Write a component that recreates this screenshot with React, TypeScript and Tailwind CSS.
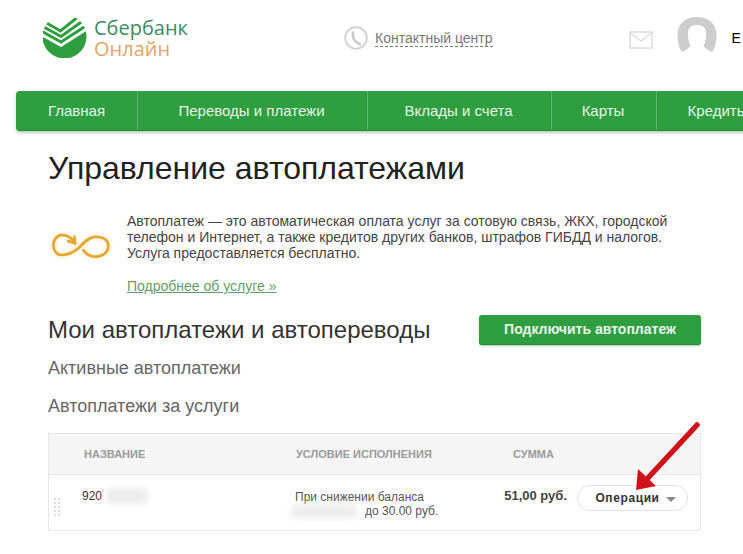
const navItems = [
  { label: "Главная", className: "w-[122px]" },
  { label: "Переводы и платежи", className: "w-[230px] pr-[2px]" },
  { label: "Вклады и счета", className: "w-[184px] pr-[2px]" },
  { label: "Карты", className: "w-[105px] pr-[2px]" },
  { label: "Кредиты", className: "w-[120px] pl-[2px]" },
];

function SberLogo() {
  return (
    <svg width="44" height="42" viewBox="0 0 44 42" className="shrink-0">
      <defs>
        <clipPath id="disc">
          <circle cx="21.5" cy="20.5" r="22" />
        </clipPath>
      </defs>
      <g clipPath="url(#disc)">
        <path d="M1 5.5 L17.5 15 L36 0" fill="none" stroke="#2f9e41" strokeWidth="3" />
        <path d="M0 10.5 L18 20.5 L39 5.5" fill="none" stroke="#2f9e41" strokeWidth="3" />
        <path d="M-1 15.5 L18 26 L42 10.5" fill="none" stroke="#2f9e41" strokeWidth="3" />
        <path d="M-2 20 L18 31 L44 14.5 L44 44 L-2 44 Z" fill="#2f9e41" />
      </g>
    </svg>
  );
}

function PhoneIcon() {
  return (
    <svg width="24" height="24" viewBox="0 0 24 24" className="shrink-0">
      <circle cx="12" cy="12" r="10.8" fill="#fff" stroke="#cfcfcf" strokeWidth="1.8" />
      <path d="M9 6.5 C8 12 11 16 16 18.5" fill="none" stroke="#c9c9c9" strokeWidth="2.6" strokeLinecap="round" />
    </svg>
  );
}

function MailIcon() {
  return (
    <svg width="24" height="18" viewBox="0 0 24 18" className="shrink-0">
      <rect x="1" y="1" width="22" height="16" fill="#fff" stroke="#dcdcdc" strokeWidth="1.6" />
      <path d="M1.5 2 L12 10 L22.5 2" fill="none" stroke="#dcdcdc" strokeWidth="1.4" />
    </svg>
  );
}

function Avatar() {
  return (
    <svg width="40" height="36" viewBox="0 0 40 36" className="shrink-0">
      <path
        d="M20 0 C32 0 39.5 7 39.5 18 C39.5 25 38 31 35 35 C32 34 29 32 26.5 29 C28.5 24 29.5 20 29 15 C28.5 10 25 8 20 8 C15 8 11.5 10 11 15 C10.5 20 11.5 24 13.5 29 C11 32 8 34 5 35 C2 31 0.5 25 0.5 18 C0.5 7 8 0 20 0 Z"
        fill="#cdcdcd"
      />
    </svg>
  );
}

function InfinityIcon() {
  return (
    <svg width="60" height="26" viewBox="0 0 60 26" className="shrink-0 drop-shadow-[0_0_2px_#f3d890]">
      <path
        d="M24 10 C21 5 16 2 10.7 2 C6 2 2.3 7 2.3 12 C2.3 18 6 22 10.7 22 C17 22 23 19 27.3 15.3 C33 10 38 3.7 44 3.7 C52 3.7 57.3 7 57.3 13 C57.3 20 51 23.7 44 23.7 C39 23.7 35 21 32.3 17"
        fill="none"
        stroke="#e3a52c"
        strokeWidth="2.6"
        strokeLinecap="round"
      />
      <path d="M17 8 L24 10.5 L23.5 3.7" fill="none" stroke="#e3a52c" strokeWidth="2.4" strokeLinecap="round" />
    </svg>
  );
}

function RedArrow() {
  return (
    <svg width="66" height="72" viewBox="0 0 66 72" className="absolute left-[635px] top-[422px]">
      <path d="M62 3 L12 57" stroke="#cf111a" strokeWidth="5.5" strokeLinecap="round" />
      <path d="M1 68 L3 47 L21 64 Z" fill="#cf111a" />
    </svg>
  );
}

export default function App() {
  return (
    <div className="relative h-[554px] w-[743px] overflow-hidden bg-white font-['Liberation_Sans',Arial,sans-serif] text-[#333]">
      {/* шапка */}
      <header className="flex h-[91px] items-start">
        <div className="ml-[43px] mt-[16px] flex w-[290px] items-start gap-[7px]">
          <SberLogo />
          <div className="mt-[1px] font-['Open_Sans',sans-serif] text-[20px] leading-[21px]">
            <div className="text-[#3f8a5d]">Сбербанк</div>
            <div className="text-[#e5a45f]">Онлайн</div>
          </div>
        </div>
        <div className="ml-[11px] mt-[26px] flex items-center gap-[7px]">
          <PhoneIcon />
          <span className="border-b border-dashed border-[#777] text-[14px] leading-[16px] text-[#777]">Контактный центр</span>
        </div>
        <div className="ml-[136px] mt-[31px]">
          <MailIcon />
        </div>
        <div className="ml-[24px] mt-[17px]">
          <Avatar />
        </div>
        <span className="ml-[15px] mt-[30px] text-[14px] leading-[16px] text-black">Е</span>
      </header>

      {/* меню */}
      <nav className="ml-[16px] flex h-[40px] w-[800px] rounded-[4px] border-b border-[#26893a] bg-[#2f9e41] shadow-[0_2px_3px_rgba(40,120,50,0.35)]">
        {navItems.map((item) => (
          <div
            key={item.label}
            className={`flex ${item.className} shrink-0 items-center justify-center border-r border-[#58b366] pt-[1px] text-[15px] text-[#e6f4e8]`}
          >
            {item.label}
          </div>
        ))}
      </nav>

      <main className="pl-[48px] pr-[42px]">
        <h1 className="mt-[18px] text-[32px] leading-[38px] text-[#222]">Управление автоплатежами</h1>

        <section className="mt-[26px] flex">
          <div className="ml-[3px] mt-[20px] w-[76px]">
            <InfinityIcon />
          </div>
          <div className="text-[14px] leading-[16px] text-[#444]">
            <p className="whitespace-nowrap">Автоплатеж — это автоматическая оплата услуг за сотовую связь, ЖКХ, городской</p>
            <p className="whitespace-nowrap">телефон и Интернет, а также кредитов других банков, штрафов ГИБДД и налогов.</p>
            <p className="whitespace-nowrap">Услуга предоставляется бесплатно.</p>
            <a className="mt-[17px] block text-[#5f9e6a] underline">Подробнее об услуге »</a>
          </div>
        </section>

        <div className="mt-[21px] flex items-center justify-between">
          <h2 className="text-[24px] leading-[30px] text-[#333]">Мои автоплатежи и автопереводы</h2>
          <button className="flex h-[30px] w-[222px] items-center justify-center rounded-[3px] border-b border-[#26893a] bg-[#2f9e41] text-[14px] font-bold text-[#e6f4e8] shadow-[0_1px_2px_rgba(40,120,50,0.4)]">
            Подключить автоплатеж
          </button>
        </div>

        <h3 className="mt-[11px] text-[18px] leading-[24px] text-[#666]">Активные автоплатежи</h3>
        <h3 className="mt-[14px] text-[18px] leading-[24px] text-[#666]">Автоплатежи за услуги</h3>

        {/* таблица */}
        <div className="mt-[15px] w-[653px] border border-[#e6e6e6]">
          <div className="flex h-[41px] items-center border-b border-[#e6e6e6] bg-[#f5f5f5] text-[11px] font-bold text-[#9b9b9b]">
            <span className="ml-[35px] w-[212px]">НАЗВАНИЕ</span>
            <span className="w-[217px]">УСЛОВИЕ ИСПОЛНЕНИЯ</span>
            <span>СУММА</span>
          </div>
          <div className="flex h-[55px] items-start">
            <div className="ml-[5px] mt-[23px] grid w-[6px] grid-cols-2 gap-[2px]">
              {Array.from({ length: 10 }).map((_, i) => (
                <span key={i} className="h-[2px] w-[2px] bg-[#dcdcdc]" />
              ))}
            </div>
            <div className="relative ml-[22px] mt-[14px] w-[213px] text-[12px] leading-[14px]">
              920
              <span className="absolute left-[25px] top-[-1px] h-[16px] w-[40px] bg-[#ececec] blur-[3px]" />
            </div>
            <div className="relative mt-[15px] w-[201px] text-[12px] leading-[14px] text-[#555]">
              <div>При снижении баланса</div>
              <div className="pl-[70px]">до 30.00 руб.</div>
              <span className="absolute left-[-4px] top-[15px] h-[13px] w-[66px] bg-[#ececec] blur-[3px]" />
            </div>
            <div className="mt-[13px] w-[71px] whitespace-nowrap text-right text-[13px] font-bold leading-[16px] text-[#444]">51,00 руб.</div>
            <button className="ml-[10px] mt-[10px] flex h-[26px] w-[111px] items-center justify-center gap-[6px] rounded-full border border-[#e2e2e2] bg-white pl-[6px] text-[12px] font-bold tracking-[0.6px] text-[#333]">
              Операции
              <span className="mt-[2px] h-0 w-0 border-x-[5px] border-t-[5px] border-x-transparent border-t-[#888]" />
            </button>
          </div>
        </div>
      </main>

      <RedArrow />
    </div>
  );
}
